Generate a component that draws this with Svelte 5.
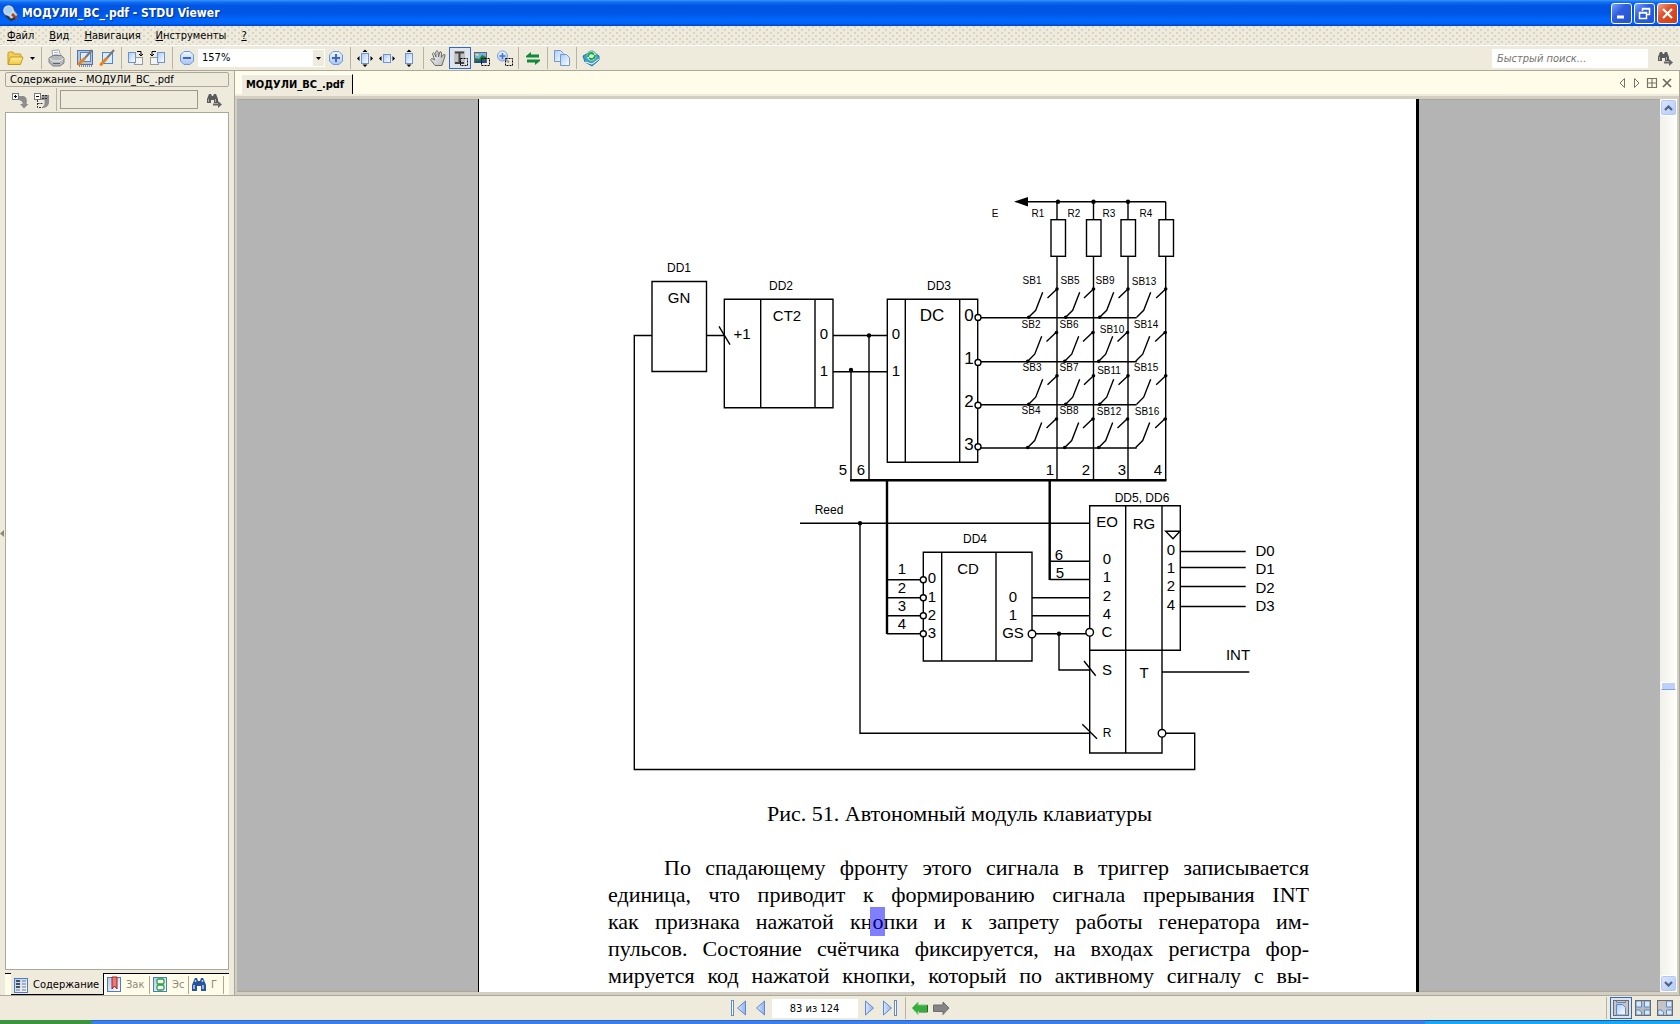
<script>
  const fileName = 'МОДУЛИ_ВС_.pdf';
  let zoom = $state('157%');
  let pageText = $state('83 из 124');
  let quick = $state('');
  let filter = $state('');

  const menu = [
    ['Ф', 'айл'],
    ['В', 'ид'],
    ['Н', 'авигация'],
    ['И', 'нструменты'],
    ['?', '']
  ];

  const toolsBeforeZoom = [
    { icon: 'printer', label: 'Печать' },
    null,
    { icon: 'editPage', label: 'Параметры' },
    { icon: 'editSmall', label: 'Правка' },
    null,
    { icon: 'rotateRight', label: 'Повернуть вправо' },
    { icon: 'rotateLeft', label: 'Повернуть влево' },
    null,
    { icon: 'minus', label: 'Уменьшить' }
  ];
  const toolsAfterZoom = [
    { icon: 'plus', label: 'Увеличить' },
    null,
    { icon: 'fitPage', label: 'Страница целиком' },
    { icon: 'fitWidth', label: 'По ширине' },
    { icon: 'fitHeight', label: 'По высоте' },
    null,
    { icon: 'hand', label: 'Рука' },
    { icon: 'textSelect', label: 'Выделение текста', on: true },
    { icon: 'imageSelect', label: 'Выделение рисунка' },
    { icon: 'zoomSelect', label: 'Лупа' },
    null,
    { icon: 'swap', label: 'Перейти' },
    null,
    { icon: 'copy', label: 'Копировать' },
    null,
    { icon: 'globe', label: 'Сайт' }
  ];

  const sideTabs = [
    { icon: 'bookmark', text: 'Зак' },
    { icon: 'thumbs', text: 'Эс' },
    { icon: 'binocBlue', text: 'Г' }
  ];

  // Key matrix: columns are the vertical wires, rows the decoder outputs.
  const columns = [1057, 1093.5, 1128, 1165.7];
  const pivots = [1028.7, 1065.7, 1099.7, 1136.7];
  const rows = [
    { wire: 317.8, contact: 289, shift: 0 },
    { wire: 361.7, contact: 332.6, shift: -1 },
    { wire: 404.7, contact: 375.7, shift: 0 },
    { wire: 448, contact: 419, shift: -1 }
  ];
  const resistors = [1051, 1086.5, 1121, 1159];

  // [x centre, baseline, size, text]
  const labels = [
    [679, 272, 12, 'DD1'], [679, 303, 15, 'GN'],
    [781, 290, 12, 'DD2'], [787, 321, 15, 'CT2'], [742, 339, 15, '+1'],
    [824, 339, 15, '0'], [824, 376, 15, '1'],
    [939, 290, 12, 'DD3'], [932, 321, 17, 'DC'],
    [896, 339, 15, '0'], [896, 376, 15, '1'],
    [969, 321, 17, '0'], [969, 364, 17, '1'], [969, 407, 17, '2'], [969, 450, 17, '3'],
    [843, 475, 15, '5'], [861, 475, 15, '6'],
    [995, 217, 10, 'E'], [1038, 217, 10, 'R1'], [1074, 217, 10, 'R2'],
    [1109, 217, 10, 'R3'], [1146, 217, 10, 'R4'],
    [1032, 284, 10, 'SB1'], [1070, 284, 10, 'SB5'], [1105, 284, 10, 'SB9'], [1144, 285, 10, 'SB13'],
    [1031, 328, 10, 'SB2'], [1069, 328, 10, 'SB6'], [1112, 333, 10, 'SB10'], [1146, 328, 10, 'SB14'],
    [1032, 371, 10, 'SB3'], [1069, 371, 10, 'SB7'], [1109, 374, 10, 'SB11'], [1146, 371, 10, 'SB15'],
    [1031, 414, 10, 'SB4'], [1069, 414, 10, 'SB8'], [1109, 415, 10, 'SB12'], [1147, 415, 10, 'SB16'],
    [1050, 475, 15, '1'], [1086, 475, 15, '2'], [1122, 475, 15, '3'], [1158, 475, 15, '4'],
    [829, 514, 12, 'Reed'], [975, 543, 12, 'DD4'], [968, 574, 15, 'CD'],
    [902, 574, 15, '1'], [902, 593, 15, '2'], [902, 611, 15, '3'], [902, 629, 15, '4'],
    [932, 583, 15, '0'], [932, 602, 15, '1'], [932, 620, 15, '2'], [932, 638, 15, '3'],
    [1013, 602, 15, '0'], [1013, 620, 15, '1'], [1013, 638, 15, 'GS'],
    [1142, 502, 12, 'DD5, DD6'], [1107, 527, 15, 'EO'], [1144, 529, 15, 'RG'],
    [1059, 560, 15, '6'], [1060, 578, 15, '5'],
    [1107, 564, 15, '0'], [1107, 582, 15, '1'], [1107, 601, 15, '2'], [1107, 619, 15, '4'], [1107, 637, 15, 'C'],
    [1107, 675, 15, 'S'], [1107, 737, 12, 'R'], [1144, 678, 15, 'T'],
    [1171, 555, 15, '0'], [1171, 573, 15, '1'], [1171, 591, 15, '2'], [1171, 610, 15, '4'],
    [1265, 556, 15, 'D0'], [1265, 574, 15, 'D1'], [1265, 593, 15, 'D2'], [1265, 611, 15, 'D3'],
    [1238, 660, 15, 'INT']
  ];

  const dots = [
    [869, 335.5], [851, 370], [860, 523.3], [1059, 633.7],
    [1058, 201.7], [1093.5, 201.7], [1128, 201.7]
  ];
  const rings = [
    [978, 317.5, 3], [978, 362.5, 3], [978, 405.3, 3], [978, 446.8, 3],
    [923.3, 579.7, 3], [923.3, 597.7, 3], [923.3, 615.7, 3], [923.3, 633.7, 3],
    [1032, 634, 3.8], [1089.7, 632.3, 3.8], [1162, 733.3, 3.8]
  ];
</script>

{#snippet icon(name)}
  <svg class="icon" width="18" height="18" viewBox="0 0 18 18" aria-hidden="true">
    {#if name === 'folder'}
      <path d="M2 15V4.500Q2 3 3.500 3H7l1.500 2H14q1 0 1 1v2" fill="#f3cf55" stroke="#c79b1c" />
      <path d="M2 15.500 4.500 8H17l-2.500 7.500z" fill="url(#gYellow)" stroke="#c79b1c" />
    {:else if name === 'printer'}
      <path d="M6 8 5 1.500 12 1l2 7z" fill="#fff" stroke="#a0a4aa" />
      <path d="M7 3.500l4-.3M7.300 5.500l4.500-.3" stroke="#9db6d8" />
      <path d="M2 9l4-2.500h8.500L17 9v5l-4 3H6l-4-3.500z" fill="#b6b8bb" stroke="#7c7f83" />
      <path d="M2.500 9.500 6 12h7l3.500-2.500" fill="none" stroke="#f2f2f2" />
      <path d="M6 14.500h7" stroke="#5f6266" />
    {:else if name === 'editPage'}
      <rect x="1.500" y="1.500" width="15" height="14" fill="#b9c3d2" stroke="#4a76b8" />
      <rect x="4.500" y="3.500" width="10" height="9" fill="#dcecff" stroke="#5b83bd" />
      <path d="M16 1 9 9" stroke="#777" stroke-width="2" />
      <path d="M8.500 9.500 3 15" stroke="#e8821b" stroke-width="3" stroke-linecap="round" />
      <path d="M3 17h13" stroke="#333" stroke-dasharray="1 1" />
    {:else if name === 'editSmall'}
      <rect x="4.500" y="3.500" width="10" height="11" fill="#dcecff" stroke="#4a86dd" />
      <path d="M16 1 9 9" stroke="#777" stroke-width="2" />
      <path d="M8.500 9.500 3 15.500" stroke="#e8821b" stroke-width="3" stroke-linecap="round" />
    {:else if name === 'rotateRight'}
      <rect x="7.500" y="8.500" width="8" height="7" fill="#f4f4f4" stroke="#9a9a9a" />
      <rect x="1.500" y="3.500" width="7" height="10" fill="url(#gPage)" stroke="#6d93d4" />
      <path d="M10 2.500h4v4M12 5l2 2 2-2" fill="none" stroke="#000" />
    {:else if name === 'rotateLeft'}
      <rect x="1.500" y="8.500" width="8" height="7" fill="#f4f4f4" stroke="#9a9a9a" />
      <rect x="8.500" y="3.500" width="7" height="10" fill="url(#gPage)" stroke="#6d93d4" />
      <path d="M7 2.500H3v4M1 5l2 2 2-2" fill="none" stroke="#000" />
    {:else if name === 'minus' || name === 'plus'}
      <path d="M6 2.500h6L15.500 6v6L12 15.500H6L2.500 12V6z" fill="url(#gBall)" stroke="#6e97dc" />
      <path d={name === 'plus' ? 'M5 9h8M9 5v8' : 'M5 9h8'} stroke="#3f68b8" stroke-width="2" />
    {:else if name === 'fitPage' || name === 'fitWidth' || name === 'fitHeight'}
      {#if name === 'fitWidth'}
        <rect x="5.500" y="5.500" width="7" height="8" fill="url(#gPage)" stroke="#6d93d4" />
      {:else}
        <rect x="5.500" y="4.500" width="7" height="10" fill="url(#gPage)" stroke="#6d93d4" />
      {/if}
      {#if name !== 'fitWidth'}<path d="M6.500 3 9 .5 11.500 3zM6.500 15.500h5L9 18z" />{/if}
      {#if name !== 'fitHeight'}<path d="M3.500 7v5L1 9.500zM14.500 7v5L17 9.500z" />{/if}
    {:else if name === 'hand'}
      <path d="M6 16.500 1.500 10.500Q2 9 4 10L5.500 11 3.500 4.500Q4.500 3 5.500 4.500L7 8 6.800 2.500Q8 1 9 2.500L9.500 8 10.800 3Q12.300 2 12.600 4L12.300 8.500 14.500 5.500Q16.500 5 16 7L14 13l-1 3.500z" fill="url(#gHand)" stroke="#6c6c6c" />
    {:else if name === 'textSelect'}
      <rect x="3" y="2" width="11" height="13" fill="#a9a9a9" opacity=".6" />
      <path d="M4 3.500h9M4 14h9M8.500 4v10" stroke="#444" stroke-width="2" />
      <rect x="9.500" y="9.500" width="7" height="7" fill="none" stroke="#000" stroke-dasharray="2 1" />
    {:else if name === 'imageSelect'}
      <rect x="1.500" y="3.500" width="12" height="10" fill="#6fb2ef" stroke="#666" />
      <path d="M2 13V9l4 1 3-4 4 2v5z" fill="#247a30" />
      <path d="M2 5h3l1 1.500H3z" fill="#ffe066" />
      <path d="M2 12h7l4-2v4H2z" fill="#1e4f9a" />
      <rect x="8.500" y="9.500" width="8" height="7" fill="none" stroke="#000" stroke-dasharray="2 1" />
    {:else if name === 'zoomSelect'}
      <circle cx="7.500" cy="7" r="5" fill="url(#gBall)" stroke="#7c9fdc" />
      <path d="M4.500 7h6M7.500 4v6" stroke="#4a72c0" stroke-width="1.500" />
      <path d="m11 10.500 3 3" stroke="#999" stroke-width="2" />
      <rect x="10.500" y="9.500" width="7" height="7" fill="none" stroke="#000" stroke-dasharray="2 1" />
    {:else if name === 'swap'}
      <path d="M2 8.500V7l5-4v2.500h8v3zM16 10.500V12l-5 4v-2.500H3v-3z" fill="#0f8a3c" />
    {:else if name === 'copy'}
      <path d="M1.500 1.500h6l3 3v8h-9z" fill="url(#gPage)" stroke="#7096d8" />
      <path d="M7.500 5.500h6l3 3v8h-9z" fill="url(#gPage)" stroke="#7096d8" />
    {:else if name === 'globe'}
      <path d="m1 7 9-5 7 5v4l-7 6L3 13z" fill="#3b9fd0" stroke="#2a78a4" />
      <path d="m3 13 7 2 7-5" fill="none" stroke="#fff" />
      <circle cx="9.500" cy="7" r="5" fill="#d4f2de" stroke="#5aa9c4" />
      <path d="M6 8q0-4 4-4l2 1.500M13 6q0 4-4 4L7 9" fill="none" stroke="#17a83a" stroke-width="1.800" />
    {:else if name === 'binoc'}
      <path d="M2 12V8l2-5h2l1 2h1l1-2h2l2 5v4H9V9H6v3z" fill="#5b5b5b" />
      <path d="M3.500 8v3M10.500 8v3" stroke="#aaa" />
      <path d="M8 12.500h5V10l4 3.500-4 3.500v-2.500H8z" fill="#666" />
    {:else if name === 'expand'}
      <path d="M8 5h5q4 2 2.500 8h2L13 17.500 9 13h2.500q.5-3-3.500-4z" fill="#8d8d8d" />
      <rect x="1.500" y="2.500" width="6" height="6" fill="#fff" stroke="#777" />
      <path d="M3 5.500h3M4.500 4v3" stroke="#000" />
    {:else if name === 'collapse'}
      <path d="M9 4h7v8q-1 5-7 5l2.500-3.500V9H8z" fill="#8d8d8d" />
      <path d="M4.500 9v7.500h5M4.500 12.500h5M9 7.500h5M9 4.500h5" fill="none" stroke="#333" stroke-dasharray="2 1" />
      <rect x="1.500" y="2.500" width="6" height="6" fill="#fff" stroke="#777" />
      <path d="M3 5.500h3" stroke="#000" />
    {:else if name === 'contents'}
      <rect x="2.500" y="2.500" width="13" height="14" fill="url(#gPage)" stroke="#4f7bc0" />
      <path d="M4 5h4M4 8h4M4 11h4" stroke="#222" stroke-width="1.500" />
      <path d="M10 5h4M10 8h4M10 11h4M4 14h4M10 14h4" stroke="#777" />
    {:else if name === 'bookmark'}
      <rect x="2.500" y="1.500" width="13" height="14" fill="url(#gPage)" stroke="#4f7bc0" />
      <path d="M7 1h5v12l-2.500-3L7 13z" fill="#e87a7a" stroke="#a81d1d" />
    {:else if name === 'thumbs'}
      <rect x="2.500" y="1.500" width="13" height="14" fill="url(#gPage)" stroke="#4f7bc0" />
      <rect x="6" y="3" width="7" height="5" rx="1.500" fill="#fff" stroke="#1ea52c" stroke-width="1.300" />
      <rect x="6" y="9" width="7" height="5" rx="1.500" fill="#fff" stroke="#1ea52c" stroke-width="1.300" />
    {:else if name === 'binocBlue'}
      <path d="M2 15V9l2-5 1-2h2l1 3h2l1-3h2l1 2 2 5v6h-5v-5H7v5z" fill="#27559c" />
      <path d="M4 9v4M13 9v4M5.500 4v2M12.500 4v2" stroke="#b9d4f7" stroke-width="1.500" />
    {:else if name === 'first'}
      <rect x="1.500" y="1.500" width="2" height="15" fill="#fff" stroke="#6288cf" />
      <path d="M15.500 2v14L7.500 9z" fill="url(#gNav)" stroke="#6288cf" />
    {:else if name === 'prev'}
      <path d="M12.500 2v14L4.500 9z" fill="url(#gNav)" stroke="#6288cf" />
    {:else if name === 'next'}
      <path d="M5.500 2v14L13.500 9z" fill="url(#gNav)" stroke="#6288cf" />
    {:else if name === 'last'}
      <rect x="12.500" y="1.500" width="2" height="15" fill="#fff" stroke="#6288cf" />
      <path d="M1.500 2v14L9.500 9z" fill="url(#gNav)" stroke="#6288cf" />
    {:else if name === 'back'}
      <path d="M1 9l6-6v3h9.500v6.500H7v3z" fill="#35ae3c" stroke="#7fc983" />
      <path d="M16.500 6v7H8" fill="none" stroke="#1d6e22" />
    {:else if name === 'forward'}
      <path d="M16 9l-6-6v3H.5v6.500H10v3z" fill="#858585" stroke="#6c6c6c" />
    {:else if name === 'single'}
      <rect x="1.500" y="1.500" width="15" height="15" fill="#c4c4c4" stroke="#6b6b6b" />
      <path d="M4.500 2v1.500h9V2" fill="none" stroke="#5d88cf" />
      <path d="M4.500 16V5.500h6l3 3V16z" fill="url(#gPage)" stroke="#5d88cf" />
    {:else if name === 'grid'}
      <rect x="1.500" y="1.500" width="15" height="15" fill="#b8b8b8" stroke="#6b6b6b" />
      <path d="M2 2h5.500v6H2zM10.500 2H16v6h-5.500zM2 11h3l2.500 2v3H2zM10.500 11H16v5h-5.500z" fill="#d5eafd" stroke="#5d88cf" />
      <path d="M1.500 1.500h15v15h-15z" fill="none" stroke="#6b6b6b" />
    {:else if name === 'gridCover'}
      <rect x="1.500" y="1.500" width="15" height="15" fill="#c4c4c4" stroke="#6b6b6b" />
      <path d="M10.500 2H16v6h-5.500zM2 11h3l2.500 2v3H2zM10.500 11H16v5h-5.500z" fill="#d5eafd" stroke="#5d88cf" />
      <path d="M1.500 1.500h15v15h-15z" fill="none" stroke="#6b6b6b" />
    {:else if name === 'app'}
      <path d="M2 5l7-3 7 9-7 5z" fill="#b9cfe6" stroke="#41618c" />
      <circle cx="6.500" cy="6.500" r="4.500" fill="#a5d3f5" stroke="#dcdcdc" stroke-width="1.500" />
      <path d="m10 10 5 5" stroke="#a54520" stroke-width="2.500" />
      <path d="M4 12l5 4 4-2" stroke="#333" stroke-width="2" fill="none" />
    {/if}
  </svg>
{/snippet}

{#snippet tool(t)}
  {#if t}
    <button class="tool" class:on={t.on} aria-label={t.label}>{@render icon(t.icon)}</button>
  {:else}
    <span class="sep"></span>
  {/if}
{/snippet}

<svg class="defs" width="0" height="0" aria-hidden="true">
  <defs>
    <linearGradient id="gYellow" x2="0" y2="1"><stop stop-color="#fff0a0" /><stop offset="1" stop-color="#f2c63c" /></linearGradient>
    <linearGradient id="gPage" x2="1" y2="1"><stop stop-color="#a9cbf5" /><stop offset="1" stop-color="#fff" /></linearGradient>
    <linearGradient id="gBall" x2="0" y2="1"><stop stop-color="#f2f7ff" /><stop offset="1" stop-color="#a5c4f4" /></linearGradient>
    <linearGradient id="gNav" x2="1" y2="0"><stop stop-color="#d9e7fb" /><stop offset="1" stop-color="#8fb2ec" /></linearGradient>
    <linearGradient id="gHand" x2="1" y2="1"><stop stop-color="#fff" /><stop offset="1" stop-color="#b5b5b5" /></linearGradient>
  </defs>
</svg>

<div class="app">
  <header class="title">
    {@render icon('app')}
    <h1>{fileName} - STDU Viewer</h1>
    <button class="win" aria-label="Свернуть">
      <svg width="17" height="17" viewBox="0 0 17 17"><path d="M4 12h7" stroke="#fff" stroke-width="3" /></svg>
    </button>
    <button class="win" aria-label="Восстановить">
      <svg width="17" height="17" viewBox="0 0 17 17"><path d="M6.500 6V3.500h7v6H11M3.500 7.500h7v6h-7zM3 8h8M6 4h8" fill="none" stroke="#fff" stroke-width="1.500" /></svg>
    </button>
    <button class="win close" aria-label="Закрыть">
      <svg width="17" height="17" viewBox="0 0 17 17"><path d="m4 4 9 9M13 4l-9 9" stroke="#fff" stroke-width="2.200" /></svg>
    </button>
  </header>

  <nav class="menu">
    {#each menu as [key, rest]}
      <button><u>{key}</u>{rest}</button>
    {/each}
  </nav>

  <div class="toolbar">
    <button class="tool" aria-label="Открыть">{@render icon('folder')}</button>
    <button class="drop" aria-label="Недавние файлы"><svg width="5" height="3"><path d="M0 0h5L2.500 3z" /></svg></button>
    <span class="sep"></span>
    {#each toolsBeforeZoom as t}{@render tool(t)}{/each}
    <label class="combo">
      <select bind:value={zoom} aria-label="Масштаб">
        <option>157%</option>
        <option>100%</option>
      </select>
      <span class="arrow"><svg width="5" height="3"><path d="M0 0h5L2.500 3z" /></svg></span>
    </label>
    {#each toolsAfterZoom as t}{@render tool(t)}{/each}
    <input class="quick" type="text" placeholder="Быстрый поиск..." aria-label="Быстрый поиск" bind:value={quick} />
    <button class="tool" aria-label="Найти">{@render icon('binoc')}</button>
  </div>

  <div class="work">
    <button class="splitter" aria-label="Скрыть панель"><svg width="4" height="7"><path d="M4 0v7L0 3.500z" fill="#8c897c" /></svg></button>
    <aside class="side">
      <h2>Содержание - {fileName}</h2>
      <div class="side-tools">
        <button class="tool" aria-label="Развернуть">{@render icon('expand')}</button>
        <button class="tool" aria-label="Свернуть всё">{@render icon('collapse')}</button>
        <span class="sep"></span>
        <input type="text" aria-label="Поиск в содержании" bind:value={filter} />
        <button class="tool" aria-label="Найти в содержании">{@render icon('binoc')}</button>
      </div>
      <div class="tree"></div>
      <div class="side-tabs">
        <button class="active">{@render icon('contents')}Содержание</button>
        {#each sideTabs as t}
          <button>{@render icon(t.icon)}<span>{t.text}</span></button>
        {/each}
      </div>
    </aside>

    <main class="doc">
      <div class="tabs">
        <button class="tab">{fileName}</button>
        <div class="tab-tools">
          <button aria-label="Предыдущая вкладка"><svg width="12" height="12"><path d="M8.500 1.500v9L4 6z" fill="none" stroke="#77746a" /></svg></button>
          <button aria-label="Следующая вкладка"><svg width="12" height="12"><path d="M3.500 1.500v9L8 6z" fill="none" stroke="#77746a" /></svg></button>
          <button aria-label="Список вкладок"><svg width="12" height="12"><path d="M1.500 1.500h9v9h-9zM6 1.500v9M1.500 6h9" fill="none" stroke="#77746a" stroke-width="1.200" /></svg></button>
          <button aria-label="Закрыть вкладку"><svg width="12" height="12"><path d="m2 2 8 8M10 2l-8 8" stroke="#6a675e" stroke-width="1.700" /></svg></button>
        </div>
      </div>

      <div class="viewport">
        <div class="canvas">
          <article class="sheet">
            <figure>
              <svg class="schematic" viewBox="479 99 937 701" role="img" aria-label="Автономный модуль клавиатуры">
                <g class="wire">
                  <path d="M652 281.500h54.500v90H652zM724.300 299.300H833v108.400H724.300zM760.700 299v108.700M815 299v108.700" />
                  <path d="M887.300 299.300h90.400v163h-90.400zM905.300 299v163.300M959.700 299v163.300" />
                  <path d="M652 335.500h-17.700v434h560.400v-36.200H1162M706.500 335.500h18M719 326.300l11 18.400" />
                  <path d="M833 335.500h54M833 371.700h54M851 370v110M869 335.500V480" />
                  <path d="M923.300 552.300H1032V661H923.300zM941.700 552.300V661M996 552.300V661" />
                  <path d="M887 579.700h36M887 597.700h36M887 615.700h36M887 633.700h36" />
                  <path d="M800 523.300h289.700M860 523.300v210h229.700M1082.300 724.300l14.700 14.400" />
                  <path d="M1032 597.700h57.700M1032 615.700h57.700M1032 633.700h57.700M1059 633.700V670h30.700M1084 661l11.700 14.700" />
                  <path d="M1089.700 505.700h90.600v144.600h-90.600zM1089.700 650V753H1162V505.700M1125.700 505.700V753" />
                  <path d="M1165.700 531.300H1180l-7 7.400zM1049.700 561.300h40M1049.700 579.500h40" />
                  <path d="M1180.300 551.500h65.400M1180.300 567.500h65.400M1180.300 586.500h65.400M1180.300 606.500h65.400M1162 672h87.300" />
                  <path d="M1026 201.700h139.700" />
                  {#each columns as x}<path d="M{x} 201.700V480" />{/each}
                  {#each rows as r}
                    <path d="M978 {r.wire}h158.700" />
                    {#each pivots as p, i}
                      <path d="M{p + r.shift} {r.wire - 0.500}l7-7 7-18M{columns[i] - 9.500 + r.shift} {r.contact + 9}l9.500-9" />
                    {/each}
                  {/each}
                  {#each resistors as x}<rect x={x} y="219.700" width="14.500" height="36.600" />{/each}
                  {#each rings as [x, y, r]}<circle cx={x} cy={y} {r} />{/each}
                </g>
                <g class="bus"><path d="M850 480.300h316.500M887 480v154M1049.700 480v100" /></g>
                <path d="M1014 201.700l14-4.700v9.400z" />
                {#each dots as [x, y]}<circle cx={x} cy={y} r="2.200" />{/each}
                {#each rows as r}
                  {#each columns as x, i}
                    <circle cx={x + r.shift / 2} cy={r.contact} r="1.800" />
                    {#if i < 3}<circle cx={pivots[i] + r.shift} cy={r.wire - 0.500} r="1.800" />{/if}
                  {/each}
                {/each}
                {#each labels as [x, y, size, text]}
                  <text {x} {y} font-size={size}>{text}</text>
                {/each}
              </svg>
              <figcaption>Рис. 51. Автономный модуль клавиатуры</figcaption>
            </figure>
            <p>
              <span class="first">По спадающему фронту этого сигнала в триггер записывается</span>
              <span>единица, что приводит к формированию сигнала прерывания INT</span>
              <span>как признака нажатой кн<mark>о</mark>пки и к запрету работы генератора им-</span>
              <span>пульсов. Состояние счётчика фиксируется, на входах регистра фор-</span>
              <span>мируется код нажатой кнопки, который по активному сигналу с вы-</span>
            </p>
          </article>
        </div>
        <div class="scroll">
          <button aria-label="Вверх"><svg width="9" height="6"><path d="M1 5l3.500-3.500L8 5" fill="none" stroke="#4d6185" stroke-width="2.200" /></svg></button>
          <span class="above"></span>
          <span class="thumb"></span>
          <span class="below"></span>
          <button aria-label="Вниз"><svg width="9" height="6"><path d="M1 1l3.500 3.500L8 1" fill="none" stroke="#4d6185" stroke-width="2.200" /></svg></button>
        </div>
      </div>
    </main>
  </div>

  <footer class="status">
    <div class="pager">
      <button class="tool" aria-label="Первая страница">{@render icon('first')}</button>
      <button class="tool" aria-label="Предыдущая страница">{@render icon('prev')}</button>
      <input type="text" aria-label="Страница" bind:value={pageText} />
      <button class="tool" aria-label="Следующая страница">{@render icon('next')}</button>
      <button class="tool" aria-label="Последняя страница">{@render icon('last')}</button>
      <span class="sep"></span>
      <button class="tool" aria-label="Назад">{@render icon('back')}</button>
      <button class="tool" aria-label="Вперёд">{@render icon('forward')}</button>
    </div>
    <div class="modes">
      <span class="sep"></span>
      <button class="tool on" aria-label="Одна страница">{@render icon('single')}</button>
      <button class="tool" aria-label="Разворот">{@render icon('grid')}</button>
      <button class="tool" aria-label="Разворот с обложкой">{@render icon('gridCover')}</button>
    </div>
  </footer>
  <div class="taskbar"><span class="start"></span><span class="tray"></span></div>
</div>

<style>
  :global(body) {
    margin: 0;
    overflow: hidden;
  }
  .app {
    --face: #eeeadc;
    --line: #aca899;
    display: flex;
    flex-direction: column;
    height: 100vh;
    background: var(--face);
    color: #000;
    font: 11px/14px 'DejaVu Sans Condensed', 'DejaVu Sans', sans-serif;
  }
  .defs {
    position: absolute;
  }
  button,
  input,
  select {
    margin: 0;
    padding: 0;
    border: 0;
    border-radius: 0;
    background: none;
    color: inherit;
    font: inherit;
    box-sizing: border-box;
    outline: 0;
  }
  svg {
    display: block;
    flex: none;
  }

  .title {
    display: flex;
    align-items: center;
    gap: 2px;
    height: 26px;
    padding: 0 2px;
    box-sizing: border-box;
    background: linear-gradient(#3b94ff 0, #1270f2 8%, #0055e3 22%, #0055e5 50%, #0066fb 75%, #0064f8 90%, #0040c4 100%);
  }
  .title h1 {
    flex: 1;
    margin: 0;
    color: #fff;
    font-size: 12px;
    line-height: 20px;
    text-shadow: 1px 1px 1px #0a2f8a;
  }
  .win {
    display: grid;
    place-items: center;
    width: 21px;
    height: 21px;
    border: 1px solid #fff;
    border-radius: 3px;
    background: linear-gradient(135deg, #7ba2f5, #2f5fe0 40%, #2354d6);
  }
  .win.close {
    background: linear-gradient(135deg, #f0a287, #e0502b 40%, #cf3c12);
  }

  .menu {
    display: flex;
    align-items: center;
    gap: 15px;
    height: 18px;
    padding: 1px 7px 0;
    background-color: var(--face);
    background-image: radial-gradient(circle at 1px 1px, #d8d3c2 1px, transparent 1px), radial-gradient(circle at 4px 4px, #d8d3c2 1px, transparent 1px);
    background-size: 7px 6px;
    border-bottom: 1px solid #fff;
  }

  .toolbar {
    display: flex;
    align-items: center;
    height: 24px;
    padding: 0 4px;
    border-bottom: 1px solid var(--line);
  }
  .tool {
    display: grid;
    place-items: center;
    width: 22px;
    height: 22px;
    flex: none;
  }
  .tool.on {
    border: 1px solid #316ac5;
    background: #dfe3ea;
  }
  .drop {
    display: grid;
    place-items: center;
    width: 12px;
    height: 22px;
  }
  .sep {
    flex: none;
    align-self: stretch;
    width: 1px;
    margin: 1px 3px;
    background: #b8b4a5;
  }
  .combo {
    display: flex;
    width: 127px;
    height: 18px;
    background: #fff;
    border: 1px solid #fff;
    box-sizing: border-box;
  }
  .combo select {
    flex: 1;
    appearance: none;
    padding-left: 3px;
  }
  .arrow {
    display: grid;
    place-items: center;
    width: 11px;
    background: var(--face);
  }
  .quick {
    width: 156px;
    height: 19px;
    margin-left: auto;
    margin-right: 6px;
    padding-left: 5px;
    background: #fff;
    font-style: italic;
  }
  .quick::placeholder {
    color: #77746c;
    opacity: 1;
  }

  .work {
    flex: 1;
    display: flex;
    min-height: 0;
  }
  .side {
    display: flex;
    flex-direction: column;
    width: 224px;
    flex: none;
    padding-top: 1px;
  }
  .side h2 {
    margin: 0;
    padding: 0 4px;
    border: 1px solid var(--line);
    border-radius: 2px;
    font-size: 11px;
    font-weight: normal;
    line-height: 13px;
    white-space: nowrap;
  }
  .side-tools {
    display: flex;
    align-items: center;
    height: 25px;
    padding: 0 4px;
  }
  .side-tools input {
    flex: 1;
    min-width: 0;
    height: 19px;
    border: 1px solid #9c988a;
    margin-right: 5px;
  }
  .tree {
    flex: 1;
    border: 1px solid var(--line);
    background: #fff;
  }
  .side-tabs {
    display: flex;
    height: 22px;
    margin-top: 3px;
    padding-left: 6px;
    background: linear-gradient(#000 0 1px, #fffce9 1px);
    color: #8c897c;
    overflow: hidden;
  }
  .side-tabs button {
    display: flex;
    align-items: center;
    gap: 3px;
    width: 46px;
    height: 18px;
    margin-top: 3px;
    padding-left: 1px;
    border-right: 1px solid var(--line);
    overflow: hidden;
    white-space: nowrap;
  }
  .side-tabs button + button + button {
    width: 39px;
  }
  .side-tabs button:last-child {
    width: 35px;
  }
  .side-tabs .active {
    width: 93px;
    height: 22px;
    margin-top: 0;
    padding-top: 3px;
    border-right: 1px solid #000;
    border-bottom: 1px solid #000;
    background: var(--face);
    color: #000;
  }

  .splitter {
    display: flex;
    align-items: center;
    width: 5px;
  }

  .doc {
    flex: 1;
    display: flex;
    flex-direction: column;
    min-width: 0;
    margin-left: 5px;
    border-left: 1px solid var(--line);
    border-right: 1px solid var(--line);
  }
  .tabs {
    display: flex;
    align-items: flex-end;
    justify-content: space-between;
    height: 23px;
    padding: 0 6px;
    background: #fffce9;
    border-bottom: 2px solid var(--face);
  }
  .tab {
    height: 20px;
    padding: 0 8px 0 4px;
    border-left: 1px solid #fff;
    border-top: 1px solid #fff;
    border-right: 1px solid #000;
    background: var(--face);
    font-weight: bold;
  }
  .tab-tools {
    display: flex;
    align-items: center;
    gap: 3px;
    height: 23px;
  }
  .viewport {
    flex: 1;
    display: flex;
    min-height: 0;
    border: 2px solid #d2cec1;
    border-top-width: 3px;
    border-bottom-width: 3px;
    background: #b4b4b4;
    box-shadow: inset 0 1px var(--line), inset 0 -1px var(--line);
  }
  .canvas {
    flex: 1;
    min-width: 0;
    overflow: hidden;
  }
  .sheet {
    max-width: 937px;
    min-height: 1300px;
    margin: 0 auto;
    border-left: 1px solid #000;
    border-right: 3px solid #000;
    background: #fff;
    font: 22px/27px 'Liberation Serif', 'Times New Roman', serif;
  }
  figure {
    margin: 0;
  }
  .schematic {
    width: 100%;
    font-family: 'Liberation Sans', Arial, sans-serif;
  }
  .schematic text {
    text-anchor: middle;
  }
  .wire {
    fill: none;
    stroke: #000;
    stroke-width: 1.4;
  }
  .wire rect,
  .wire circle {
    fill: #fff;
  }
  .bus {
    fill: none;
    stroke: #000;
    stroke-width: 2.4;
  }
  figcaption {
    padding-left: 24px;
    text-align: center;
  }
  .sheet p {
    margin: 27px 107px 0 129px;
  }
  .sheet p span {
    display: block;
    text-align: justify;
    text-align-last: justify;
    white-space: nowrap;
  }
  .sheet p .first {
    padding-left: 56px;
  }
  mark {
    padding: 2px;
    margin: 0 -2px;
    background: #8080ff;
    color: #000080;
  }

  .scroll {
    display: flex;
    flex-direction: column;
    width: 17px;
    background: linear-gradient(90deg, #f1f0ea, #fefefb);
  }
  .scroll button {
    display: grid;
    place-items: center;
    height: 17px;
    border: 1px solid #fff;
    border-radius: 3px;
    background: linear-gradient(135deg, #dbe6fe, #b3c9f8);
    box-shadow: inset 0 0 0 1px #b5c7ef;
  }
  .above {
    flex: 665;
  }
  .below {
    flex: 335;
  }
  .thumb {
    height: 6px;
    margin: 0 1px;
    border: 1px solid #fff;
    border-bottom-color: #86a3dc;
    background: #bdd0fa;
  }

  .status {
    display: grid;
    grid-template-columns: 1fr auto 1fr;
    height: 24px;
    padding: 0 4px;
    border-top: 1px solid var(--line);
  }
  .pager,
  .modes {
    display: flex;
    align-items: center;
  }
  .pager {
    grid-column: 2;
  }
  .pager input {
    width: 86px;
    height: 19px;
    background: #fff;
    text-align: center;
  }
  .modes {
    justify-content: flex-end;
  }
  .taskbar {
    display: flex;
    justify-content: space-between;
    height: 4px;
    background: linear-gradient(#2a62d8 1px, #3a80e8 1px);
  }
  .start {
    width: 92px;
    border-radius: 0 3px 0 0;
    background: #3c9440;
  }
  .tray {
    width: 255px;
    background: linear-gradient(#0d5cc8 1px, #17a8f0 1px);
  }
</style>
